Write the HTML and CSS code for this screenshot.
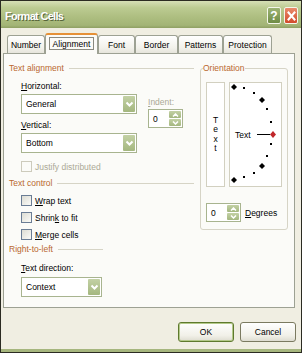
FILE: index.html
```html
<!DOCTYPE html>
<html>
<head>
<meta charset="utf-8">
<link rel="stylesheet" href="styles.css">
</head>
<body>
<div class="dialog">
  <div class="titlebar">
    <span class="title">Format Cells</span>
    <div class="caption-btns">
      <span class="cap help">?</span>
      <span class="cap close"><svg width="9" height="10" viewBox="0 0 9 10"><path d="M1.5 1.5 L7.5 8.5 M7.5 1.5 L1.5 8.5" stroke="#fff" stroke-width="2" stroke-linecap="square"/></svg></span>
    </div>
  </div>

  <div class="tabs">
    <div class="tab w-number">Number</div>
    <div class="tab active w-align">Alignment</div>
    <div class="tab w-font">Font</div>
    <div class="tab w-border">Border</div>
    <div class="tab w-patterns">Patterns</div>
    <div class="tab w-protect">Protection</div>
  </div>

  <div class="panel">
    <div class="col-left">
      <div class="gtitle g1"><span>Text alignment</span><i class="rule"></i></div>
      <div class="sub">
        <div class="align-row">
          <div class="hv">
            <div class="lbl l-h"><u>H</u>orizontal:</div>
            <div class="select s-wide"><span class="val">General</span><span class="dd"><svg width="9" height="7" viewBox="0 0 9 7"><path d="M1.5 1.5 L4.5 4.5 L7.5 1.5" stroke="#fff" stroke-width="2" fill="none"/></svg></span></div>
            <div class="lbl l-v"><u>V</u>ertical:</div>
            <div class="select s-wide"><span class="val">Bottom</span><span class="dd"><svg width="9" height="7" viewBox="0 0 9 7"><path d="M1.5 1.5 L4.5 4.5 L7.5 1.5" stroke="#fff" stroke-width="2" fill="none"/></svg></span></div>
          </div>
          <div class="indent">
            <div class="lbl dis"><u>I</u>ndent:</div>
            <div class="spin s-indent"><span class="val">0</span><span class="spinbtns"><span class="sb"><svg width="7" height="4" viewBox="0 0 7 4"><path d="M1 3.5 L3.5 1 L6 3.5" stroke="#fff" stroke-width="1.5" fill="none"/></svg></span><span class="sb"><svg width="7" height="4" viewBox="0 0 7 4"><path d="M1 0.5 L3.5 3 L6 0.5" stroke="#fff" stroke-width="1.5" fill="none"/></svg></span></span></div>
          </div>
        </div>
        <div class="check dis c-justify"><span class="box"></span><span>Justify distributed</span></div>
      </div>

      <div class="gtitle g2"><span>Text control</span><i class="rule"></i></div>
      <div class="sub">
        <div class="check"><span class="box"></span><span><u>W</u>rap text</span></div>
        <div class="check"><span class="box"></span><span>Shrin<u>k</u> to fit</span></div>
        <div class="check"><span class="box"></span><span><u>M</u>erge cells</span></div>
      </div>

      <div class="gtitle g3"><span>Right-to-left</span><i class="rule"></i></div>
      <div class="sub">
        <div class="lbl l-dir"><u>T</u>ext direction:</div>
        <div class="select s-narrow"><span class="val">Context</span><span class="dd"><svg width="9" height="7" viewBox="0 0 9 7"><path d="M1.5 1.5 L4.5 4.5 L7.5 1.5" stroke="#fff" stroke-width="2" fill="none"/></svg></span></div>
      </div>
    </div>

    <div class="col-right">
      <fieldset class="orient">
        <legend>Orientation</legend>
        <div class="orient-boxes">
          <div class="vtext"><span>T</span><span>e</span><span>x</span><span>t</span></div>
          <div class="dial">
            <svg width="51" height="103" viewBox="1 1 51 103">
              <g fill="#000">
                <path d="M5 2 L8 5 L5 8 L2 5 Z"/>
                <path d="M33 15 L36 18 L33 21 L30 18 Z"/>
                <path d="M33 81 L36 84 L33 87 L30 84 Z"/>
                <path d="M5 95 L8 98 L5 101 L2 98 Z"/>
                <rect x="14" y="5" width="2" height="2"/>
                <rect x="24" y="10" width="2" height="2"/>
                <rect x="37" y="26" width="2" height="2"/>
                <rect x="41" y="39" width="2" height="2"/>
                <rect x="41" y="61" width="2" height="2"/>
                <rect x="37" y="73" width="2" height="2"/>
                <rect x="24" y="90" width="2" height="2"/>
                <rect x="14" y="94" width="2" height="2"/>
              </g>
              <line x1="28" y1="52.5" x2="41" y2="52.5" stroke="#000" stroke-width="1"/>
              <path d="M44 49 L47 52.5 L44 56 L41 52.5 Z" fill="#c0262a"/>
            </svg>
            <span class="dial-text">Text</span>
          </div>
        </div>
        <div class="deg-row">
          <div class="spin s-deg"><span class="val">0</span><span class="spinbtns"><span class="sb"><svg width="7" height="4" viewBox="0 0 7 4"><path d="M1 3.5 L3.5 1 L6 3.5" stroke="#fff" stroke-width="1.5" fill="none"/></svg></span><span class="sb"><svg width="7" height="4" viewBox="0 0 7 4"><path d="M1 0.5 L3.5 3 L6 0.5" stroke="#fff" stroke-width="1.5" fill="none"/></svg></span></span></div>
          <span class="deg-lbl"><u>D</u>egrees</span>
        </div>
      </fieldset>
    </div>
  </div>

  <div class="buttons">
    <div class="btn default">OK</div>
    <div class="btn">Cancel</div>
  </div>
</div>
</body>
</html>
```

FILE: styles.css
```css
* { box-sizing: border-box; }

body {
  margin: 0;
  background: #ffffff;
}

.dialog {
  width: 302px;
  height: 353px;
  border: 1px solid #2b2b22;
  background: #f0eee2;
  display: flex;
  flex-direction: column;
  font-family: "Liberation Sans", Arial, sans-serif;
  font-size: 8.5px;
  color: #000;
  box-shadow: inset 0 -3px 0 #a6b67e;
}

/* title bar */
.titlebar {
  height: 27px;
  flex: none;
  display: flex;
  align-items: center;
  justify-content: space-between;
  padding: 0 3px 0 4px;
  background: linear-gradient(#d6dfb6 0%, #bccb92 25%, #adbe80 60%, #a3b476 90%, #8e9f62 100%);
}

.title {
  color: #fff;
  font-weight: bold;
  font-size: 11px;
  letter-spacing: -0.7px;
  text-shadow: 1px 1px 0 #56653a;
  margin-top: 2px;
}

.caption-btns {
  display: flex;
  gap: 3px;
  margin-top: 2px;
}

.cap {
  width: 14px;
  height: 17px;
  border: 1px solid #f4f6ea;
  border-radius: 2px;
  display: flex;
  align-items: center;
  justify-content: center;
  color: #fff;
  font-weight: bold;
  font-size: 12px;
}

.help {
  background: linear-gradient(#9db474, #6f8c45);
}

.close {
  background: linear-gradient(#e98b6c, #d24a2c);
}

/* tabs */
.tabs {
  display: flex;
  align-items: flex-end;
  height: 20px;
  margin-top: 5px;
  padding-left: 6px;
  position: relative;
  z-index: 1;
}

.tab {
  height: 18px;
  border: 1px solid #9da193;
  border-bottom: none;
  border-radius: 3px 3px 0 0;
  background: linear-gradient(#ffffff, #f2f1ea 70%, #e6e5dc);
  display: flex;
  align-items: center;
  justify-content: center;
  padding-top: 1px;
}

.tab.active {
  height: 21px;
  margin-bottom: -1px;
  border-top: 2px solid #e69137;
  background: #fbfbf8;
  padding-bottom: 2px;
}

.w-number { width: 38px; }
.w-align { width: 53px; }
.w-font { width: 37px; }
.w-border { width: 43px; }
.w-patterns { width: 45px; }
.w-protect { width: 49px; }

.w-align {
  outline: 1px solid #8a8a80;
  outline-offset: -5px;
}

/* panel */
.panel {
  margin-left: 2px;
  width: 292px;
  height: 255px;
  flex: none;
  border: 1px solid #9da193;
  background: #fbfbf8;
  display: flex;
}

.col-left {
  width: 190px;
  padding-left: 5px;
  padding-top: 8px;
  display: flex;
  flex-direction: column;
}

.gtitle {
  height: 12px;
  display: flex;
  align-items: center;
  color: #b9682f;
  white-space: nowrap;
}

.gtitle .rule {
  display: block;
  height: 1px;
  background: #d6d4c6;
  flex: 1;
  margin-left: 5px;
}

.g3 {
  width: 94px;
}

.sub {
  padding-left: 12px;
  display: flex;
  flex-direction: column;
}

.lbl {
  height: 12px;
  line-height: 12px;
}

.l-h { margin-top: 6px; }
.l-v { margin-top: 5px; }
.l-dir { margin-top: 7px; }

.dis { color: #aba996; }

.align-row {
  display: flex;
  align-items: flex-start;
}

.hv {
  display: flex;
  flex-direction: column;
}

.select {
  height: 20px;
  border: 1px solid #a8b48f;
  background: #fff;
  display: flex;
  align-items: center;
  justify-content: space-between;
  padding: 1px 1px 1px 4px;
  margin-top: 2px;
}

.s-wide { width: 116px; }
.s-narrow { width: 81px; margin-top: 3px; }

.dd {
  width: 12px;
  height: 16px;
  border-radius: 1px;
  background: linear-gradient(#c3d1a5, #a4b77f);
  display: flex;
  align-items: center;
  justify-content: center;
}

.indent {
  margin-left: 11px;
  margin-top: 22px;
  display: flex;
  flex-direction: column;
}

.spin {
  width: 35px;
  height: 19px;
  border: 1px solid #a8b48f;
  background: #fff;
  display: flex;
  align-items: stretch;
  justify-content: space-between;
  padding: 1px;
}

.s-indent { margin-top: 1px; }

.spin .val {
  padding-left: 3px;
  display: flex;
  align-items: center;
}

.spinbtns {
  width: 12px;
  display: flex;
  flex-direction: column;
  gap: 1px;
}

.sb {
  flex: 1;
  border-radius: 1px;
  background: linear-gradient(#c3d1a5, #a4b77f);
  display: flex;
  align-items: center;
  justify-content: center;
}

.check {
  height: 17px;
  display: flex;
  align-items: center;
  gap: 3px;
}

.check .box {
  width: 11px;
  height: 11px;
  border: 1px solid #6a7d95;
  background: linear-gradient(135deg, #dcdcd3, #fbfbf8);
}

.check.dis .box {
  border-color: #cdcbbc;
  background: #fbfbf8;
}

.c-justify { margin-top: 5px; }

.g2 { margin-top: 2px; }
.g2 + .sub { margin-top: 3px; }

/* right column */
.col-right {
  padding-left: 6px;
  padding-top: 8px;
}

.orient {
  margin: 0;
  width: 88px;
  border: 1px solid #d6d4c6;
  border-radius: 3px;
  padding: 8px 5px 7px 5px;
}

.orient legend {
  color: #b9682f;
  padding: 0;
  margin-left: -3px;
  height: 12px;
  line-height: 12px;
}

.orient-boxes {
  display: flex;
  gap: 4px;
}

.vtext {
  width: 19px;
  height: 105px;
  border: 1px solid #d2d0c0;
  background: #fff;
  display: flex;
  flex-direction: column;
  align-items: center;
  justify-content: center;
  line-height: 9.5px;
}

.dial {
  width: 53px;
  height: 105px;
  border: 1px solid #d2d0c0;
  background: #fff;
  position: relative;
}

.dial svg {
  display: block;
}

.dial-text {
  position: absolute;
  left: 5px;
  top: 46px;
  line-height: 12px;
}

.deg-row {
  margin-top: 16px;
  display: flex;
  align-items: center;
  gap: 4px;
}

/* buttons */
.buttons {
  display: flex;
  justify-content: flex-end;
  gap: 6px;
  margin-top: 14px;
  padding-right: 5px;
}

.btn {
  width: 56px;
  height: 20px;
  border: 1px solid #7b7a60;
  border-radius: 3px;
  background: linear-gradient(#ffffff, #f1f0e8 70%, #dedcd0);
  display: flex;
  align-items: center;
  justify-content: center;
}

.btn.default {
  border: 1px solid #5f7a2e;
  box-shadow: inset 0 0 0 1px #b4c98a;
}
```
